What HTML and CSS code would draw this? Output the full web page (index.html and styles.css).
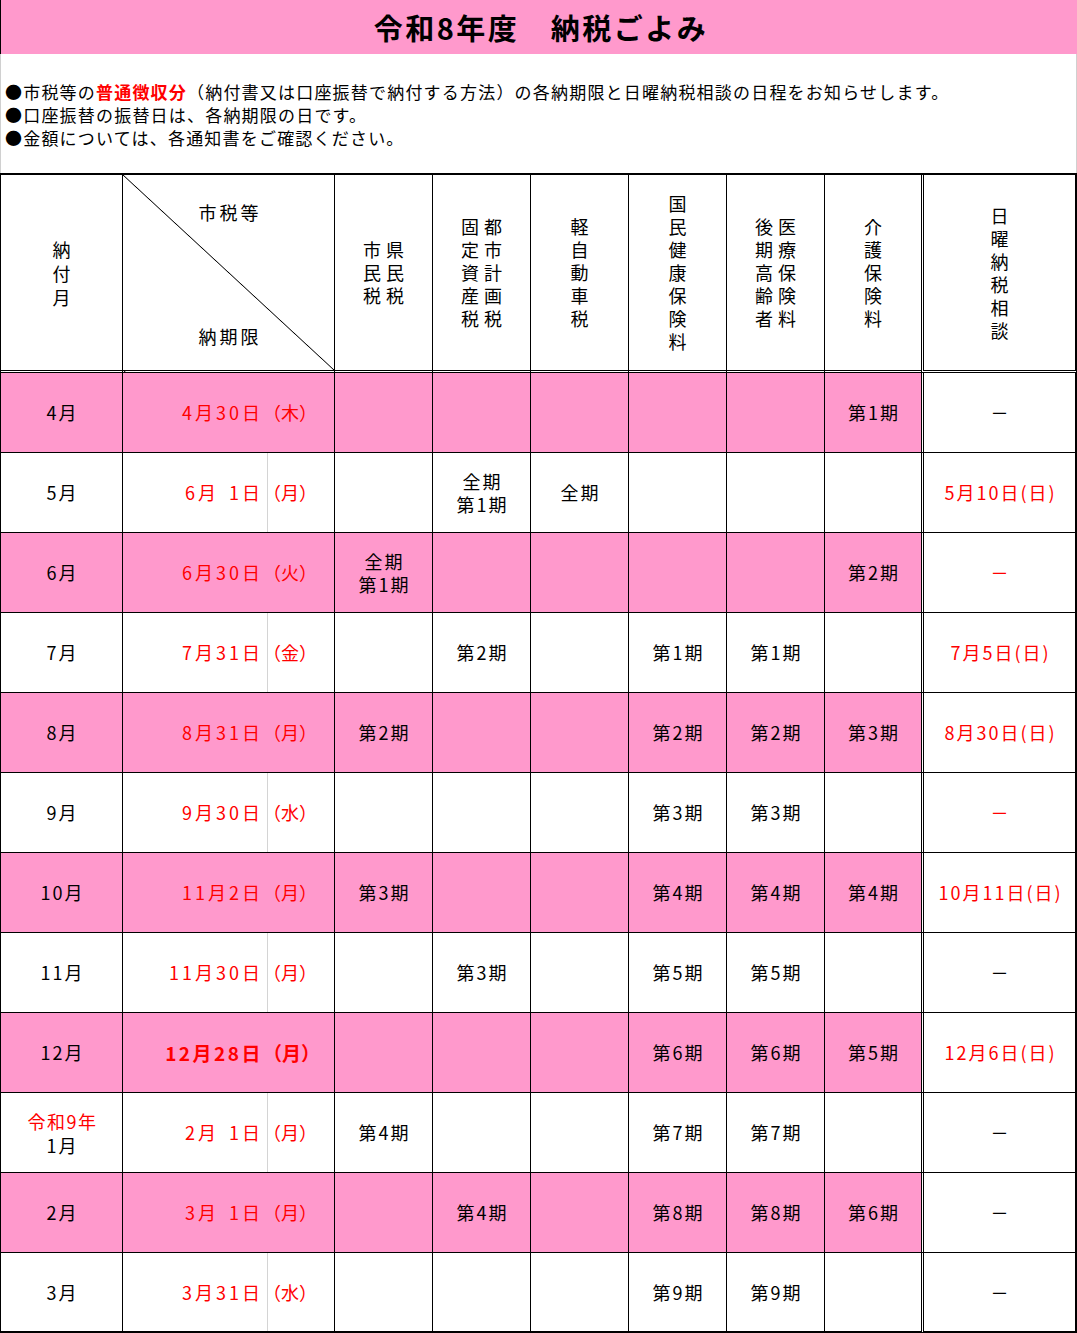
FILE: index.html
```html
<!DOCTYPE html>
<html lang="ja">
<head>
<meta charset="utf-8">
<title>令和8年度 納税ごよみ</title>
<link rel="stylesheet" href="styles.css">
</head>
<body>
<div class="title">令和8年度　納税ごよみ</div>
<div class="notes">
  <p>●市税等の<span class="em">普通徴収分</span>（納付書又は口座振替で納付する方法）の各納期限と日曜納税相談の日程をお知らせします。</p>
  <p>●口座振替の振替日は、各納期限の日です。</p>
  <p>●金額については、各通知書をご確認ください。</p>
</div>
<div class="tbl">
  <div class="row hdr">
    <div class="c vt lh24"><span>納<br>付<br>月</span></div>
    <div class="c diag"><span class="dtop">市税等</span><span class="dbot">納期限</span></div>
    <div class="c vt two"><span>市県<br>民民<br>税税</span></div>
    <div class="c vt two"><span>固都<br>定市<br>資計<br>産画<br>税税</span></div>
    <div class="c vt"><span>軽<br>自<br>動<br>車<br>税</span></div>
    <div class="c vt"><span>国<br>民<br>健<br>康<br>保<br>険<br>料</span></div>
    <div class="c vt two"><span>後医<br>期療<br>高保<br>齢険<br>者料</span></div>
    <div class="c c8 vt"><span>介<br>護<br>保<br>険<br>料</span></div>
    <div class="c c9 vt"><span>日<br>曜<br>納<br>税<br>相<br>談</span></div>
  </div>

  <div class="row pk">
    <div class="c m">4月</div>
    <div class="c dt"><span class="d">4月30日</span><span class="w">（木）</span></div>
    <div class="c"></div><div class="c"></div><div class="c"></div><div class="c"></div><div class="c"></div>
    <div class="c c8 k">第1期</div>
    <div class="c c9 k">－</div>
  </div>

  <div class="row wh">
    <div class="c m">5月</div>
    <div class="c dt"><span class="d">6月<i class="sp"></i>1日</span><span class="w">（月）</span></div>
    <div class="c"></div>
    <div class="c k two-l">全期<br>第1期</div>
    <div class="c k">全期</div>
    <div class="c"></div><div class="c"></div>
    <div class="c c8"></div>
    <div class="c c9 k red">5月10日(日)</div>
  </div>

  <div class="row pk">
    <div class="c m">6月</div>
    <div class="c dt"><span class="d">6月30日</span><span class="w">（火）</span></div>
    <div class="c k two-l">全期<br>第1期</div>
    <div class="c"></div><div class="c"></div><div class="c"></div><div class="c"></div>
    <div class="c c8 k">第2期</div>
    <div class="c c9 k red">－</div>
  </div>

  <div class="row wh">
    <div class="c m">7月</div>
    <div class="c dt"><span class="d">7月31日</span><span class="w">（金）</span></div>
    <div class="c"></div>
    <div class="c k">第2期</div>
    <div class="c"></div>
    <div class="c k">第1期</div>
    <div class="c k">第1期</div>
    <div class="c c8"></div>
    <div class="c c9 k red">7月5日(日)</div>
  </div>

  <div class="row pk">
    <div class="c m">8月</div>
    <div class="c dt"><span class="d">8月31日</span><span class="w">（月）</span></div>
    <div class="c k">第2期</div>
    <div class="c"></div><div class="c"></div>
    <div class="c k">第2期</div>
    <div class="c k">第2期</div>
    <div class="c c8 k">第3期</div>
    <div class="c c9 k red">8月30日(日)</div>
  </div>

  <div class="row wh">
    <div class="c m">9月</div>
    <div class="c dt"><span class="d">9月30日</span><span class="w">（水）</span></div>
    <div class="c"></div><div class="c"></div><div class="c"></div>
    <div class="c k">第3期</div>
    <div class="c k">第3期</div>
    <div class="c c8"></div>
    <div class="c c9 k red">－</div>
  </div>

  <div class="row pk">
    <div class="c m">10月</div>
    <div class="c dt"><span class="d">11月2日</span><span class="w">（月）</span></div>
    <div class="c k">第3期</div>
    <div class="c"></div><div class="c"></div>
    <div class="c k">第4期</div>
    <div class="c k">第4期</div>
    <div class="c c8 k">第4期</div>
    <div class="c c9 k red">10月11日(日)</div>
  </div>

  <div class="row wh">
    <div class="c m">11月</div>
    <div class="c dt"><span class="d">11月30日</span><span class="w">（月）</span></div>
    <div class="c"></div>
    <div class="c k">第3期</div>
    <div class="c"></div>
    <div class="c k">第5期</div>
    <div class="c k">第5期</div>
    <div class="c c8"></div>
    <div class="c c9 k">－</div>
  </div>

  <div class="row pk">
    <div class="c m">12月</div>
    <div class="c dt bold"><span class="d">12月28日</span><span class="w">（月）</span></div>
    <div class="c"></div><div class="c"></div><div class="c"></div>
    <div class="c k">第6期</div>
    <div class="c k">第6期</div>
    <div class="c c8 k">第5期</div>
    <div class="c c9 k red">12月6日(日)</div>
  </div>

  <div class="row wh">
    <div class="c m two-m"><span class="red">令和9年</span><span>1月</span></div>
    <div class="c dt"><span class="d">2月<i class="sp"></i>1日</span><span class="w">（月）</span></div>
    <div class="c k">第4期</div>
    <div class="c"></div><div class="c"></div>
    <div class="c k">第7期</div>
    <div class="c k">第7期</div>
    <div class="c c8"></div>
    <div class="c c9 k">－</div>
  </div>

  <div class="row pk">
    <div class="c m">2月</div>
    <div class="c dt"><span class="d">3月<i class="sp"></i>1日</span><span class="w">（月）</span></div>
    <div class="c"></div>
    <div class="c k">第4期</div>
    <div class="c"></div>
    <div class="c k">第8期</div>
    <div class="c k">第8期</div>
    <div class="c c8 k">第6期</div>
    <div class="c c9 k">－</div>
  </div>

  <div class="row wh last">
    <div class="c m">3月</div>
    <div class="c dt"><span class="d">3月31日</span><span class="w">（水）</span></div>
    <div class="c"></div><div class="c"></div><div class="c"></div>
    <div class="c k">第9期</div>
    <div class="c k">第9期</div>
    <div class="c c8"></div>
    <div class="c c9 k">－</div>
  </div>
</div>
</body>
</html>
```

FILE: styles.css
```css
* { box-sizing: border-box; }

html, body {
  margin: 0;
  padding: 0;
  background: #fff;
}

body {
  width: 1077px;
  font-family: "Noto Sans CJK JP", "Noto Sans", sans-serif;
  color: #000;
}

.title {
  height: 54px;
  background: #ff99cc;
  border-left: 1px solid #000;
  font-size: 29px;
  font-weight: bold;
  letter-spacing: 2.5px;
  line-height: 54px;
  text-align: center;
  padding-left: 4px;
}

.notes {
  height: 119px;
  padding: 26px 0 0 4px;
  border-left: 1px solid #d0d0d0;
  border-right: 1px solid #d0d0d0;
  font-size: 17px;
  letter-spacing: 1.2px;
  line-height: 23px;
}

.notes p {
  margin: 0;
  white-space: nowrap;
}

.em {
  color: #ff0000;
  font-weight: bold;
}

.tbl {
  width: 1077px;
  border-left: 1px solid #000;
  border-top: 2px solid #000;
}

.row {
  display: grid;
  grid-template-columns: 122px 212px 98px 98px 98px 98px 98px 96px 156px;
  height: 80px;
}

.row.hdr {
  height: 198px;
}

.c {
  border-right: 1px solid #000;
  border-bottom: 1px solid #000;
  display: flex;
  align-items: center;
  justify-content: center;
  font-size: 18px;
  line-height: 23px;
  text-align: center;
  white-space: nowrap;
}

.c8 { border-right: none; }

.c9 {
  border-left: 3px double #000;
  border-right: 2px solid #000;
  background: #fff;
}

.hdr .c { border-bottom: 3px double #000; }

.last .c { border-bottom-width: 2px; }

.pk .c { background: #ff99cc; }
.pk .c.c9 { background: #fff; }

/* header vertical text */
.vt span {
  display: block;
  line-height: 23px;
}

.lh24 span { line-height: 24px; }

.two span {
  letter-spacing: 5px;
  padding-left: 5px;
}

.diag {
  flex-direction: column;
  justify-content: space-between;
  padding: 26px 0 22px 0;
  background: linear-gradient(to top right, transparent calc(50% - 0.8px), #000 50%, transparent calc(50% + 0.8px));
}

.diag span {
  letter-spacing: 3px;
  padding-left: 3px;
}

/* body cells */
.m {
  letter-spacing: 2px;
  padding-left: 2px;
}

.two-m {
  flex-direction: column;
  line-height: 24px;
}

.two-m .red {
  letter-spacing: 1.5px;
}

.k {
  letter-spacing: 2px;
  padding-left: 2px;
}

.c9.k {
  letter-spacing: 2px;
  padding-left: 2px;
}

.two-l {
  line-height: 23px;
}

.red { color: #ff0000; }

.dt {
  justify-content: flex-start;
  align-items: stretch;
  color: #ff0000;
}

.dt .d {
  width: 144px;
  display: flex;
  align-items: center;
  justify-content: flex-end;
  padding-right: 4px;
  letter-spacing: 3px;
}

.dt .w {
  flex: 1;
  display: flex;
  align-items: center;
  border-left: 1px solid transparent;
  text-indent: -5px;
}

.wh .dt .w { border-left-color: #d4d4d4; }

.dt.bold {
  font-weight: bold;
  font-size: 19px;
}

.dt.bold .d { letter-spacing: 2.5px; }

.sp {
  display: inline-block;
  width: 10px;
}
```
